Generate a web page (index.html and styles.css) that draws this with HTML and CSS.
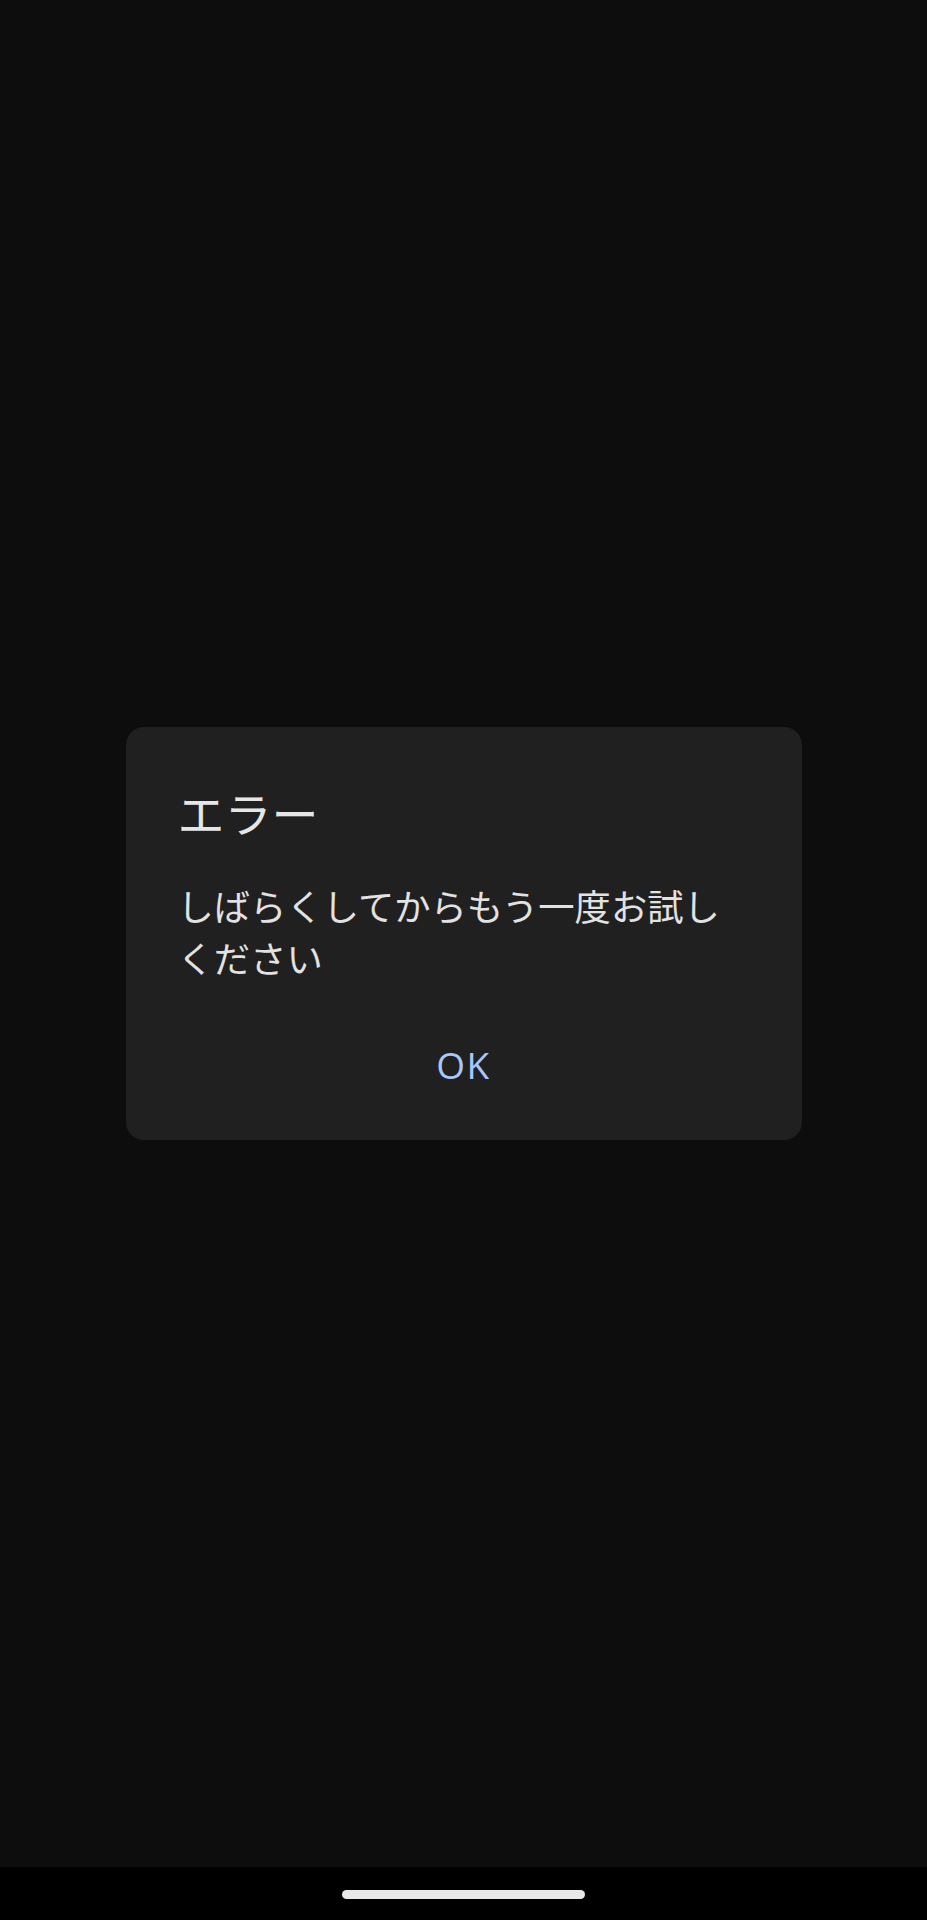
FILE: index.html
```html
<!DOCTYPE html>
<html lang="ja">
<head>
<meta charset="utf-8">
<title>エラー</title>
<link rel="stylesheet" href="styles.css">
</head>
<body>
<div class="screen">
  <main class="content">
    <div class="dialog" role="alertdialog">
      <h1 class="dialog-title">エラー</h1>
      <p class="dialog-body">しばらくしてからもう一度お試しください</p>
      <div class="dialog-actions">
        <button class="btn-text">OK</button>
      </div>
    </div>
  </main>
  <div class="navbar"><div class="home-pill"></div></div>
</div>
</body>
</html>
```
FILE: styles.css
```css
html, body {
  margin: 0;
  padding: 0;
  background: #0d0d0d;
}
body {
  font-family: "Noto Sans CJK JP", "Noto Sans", sans-serif;
}
.screen {
  width: 927px;
  height: 1920px;
  display: flex;
  flex-direction: column;
}
.content {
  flex: 1;
  background: #0d0d0d;
  display: flex;
  align-items: center;
  justify-content: center;
}
.dialog {
  width: 676px;
  box-sizing: border-box;
  background: #202020;
  border-radius: 18px;
  padding: 55px 52px 27px;
}
.dialog-title {
  margin: 0;
  font-size: 47px;
  line-height: 60px;
  font-weight: 400;
  color: #e6e6e6;
}
.dialog-body {
  margin: 37px 0 0;
  font-size: 36.3px;
  line-height: 52px;
  color: #e2e2e2;
}
.dialog-actions {
  margin-top: 34px;
  display: flex;
  justify-content: center;
}
.btn-text {
  background: none;
  border: none;
  padding: 28px 24px;
  font-family: "Open Sans", Roboto, sans-serif;
  font-size: 37px;
  line-height: 40px;
  font-weight: 400;
  letter-spacing: 1.5px;
  color: #a8c7fa;
}
.navbar {
  height: 53px;
  background: #000;
  display: flex;
  justify-content: center;
  align-items: flex-start;
}
.home-pill {
  margin-top: 23px;
  width: 243px;
  height: 9px;
  border-radius: 5px;
  background: #e8e8e8;
}
```
